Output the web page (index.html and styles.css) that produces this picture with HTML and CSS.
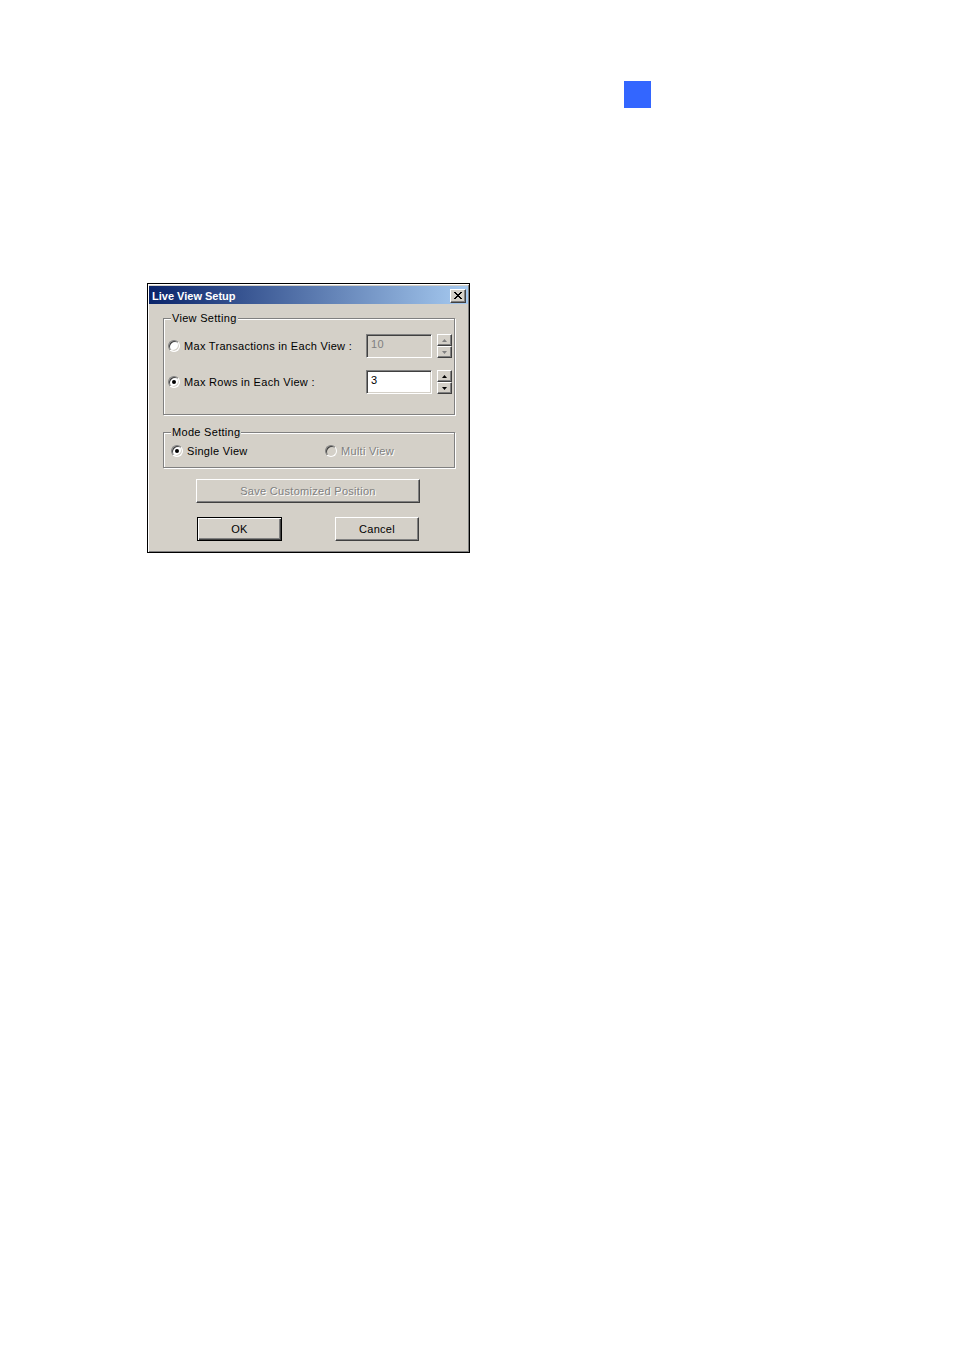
FILE: index.html
```html
<!DOCTYPE html>
<html>
<head>
<meta charset="utf-8">
<link rel="stylesheet" href="styles.css">
</head>
<body>
<div class="page">
  <div class="marker"></div>
  <div class="dialog">
    <div class="titlebar">
      <span class="title">Live View Setup</span>
      <span class="close"><svg width="8" height="7" viewBox="0 0 8 7"><path d="M0 0h2v1h1v1h2V1h1V0h2v1H7v1H6v1H5v1h1v1h1v1h1v1H6V6H5V5H3v1H2v1H0V6h1V5h1V4h1V3H2V2H1V1H0z" fill="#000"/></svg></span>
    </div>
    <div class="content">
      <fieldset class="group">
        <legend>View Setting</legend>
        <div class="group-inner rows">
          <div class="row">
            <span class="radio"></span>
            <span class="label">Max Transactions in Each View :</span>
            <span class="input disabled">10</span>
            <span class="spin">
              <span class="sbtn"><svg width="5" height="3" viewBox="0 0 5 3"><polygon points="2.5,0 5,3 0,3" fill="#808080"/></svg></span>
              <span class="sbtn"><svg width="5" height="3" viewBox="0 0 5 3"><polygon points="0,0 5,0 2.5,3" fill="#808080"/></svg></span>
            </span>
          </div>
          <div class="row">
            <span class="radio checked"></span>
            <span class="label">Max Rows in Each View :</span>
            <span class="input">3</span>
            <span class="spin">
              <span class="sbtn"><svg width="5" height="3" viewBox="0 0 5 3"><polygon points="2.5,0 5,3 0,3" fill="#000"/></svg></span>
              <span class="sbtn"><svg width="5" height="3" viewBox="0 0 5 3"><polygon points="0,0 5,0 2.5,3" fill="#000"/></svg></span>
            </span>
          </div>
        </div>
      </fieldset>
      <fieldset class="group group2">
        <legend>Mode Setting</legend>
        <div class="group-inner modes">
          <div class="opt"><span class="radio checked"></span><span class="label">Single View</span></div>
          <div class="opt off"><span class="radio dis"></span><span class="label">Multi View</span></div>
        </div>
      </fieldset>
      <div class="btn save off">Save Customized Position</div>
      <div class="actions">
        <div class="btn ok default">OK</div>
        <div class="btn cancel">Cancel</div>
      </div>
    </div>
  </div>
</div>
</body>
</html>
```
FILE: styles.css
```css
* { box-sizing: border-box; }
body { margin: 0; background: #fff; font-family: "Liberation Sans", Arial, sans-serif; }
.page { width: 954px; height: 1350px; overflow: hidden; padding-top: 81px; }
.marker { width: 27px; height: 27px; background: #3366ff; margin-left: 624px; }

.dialog {
  margin: 175px 0 0 147px;
  width: 323px;
  height: 270px;
  background: #d4d0c8;
  border: 1px solid #000;
  box-shadow: inset 1px 1px #fff, inset -1px -1px #808080;
  padding: 1px;
  font-size: 11px;
  letter-spacing: 0.3px;
  color: #000;
}
.titlebar {
  height: 18px;
  margin-top: 1px;
  background: linear-gradient(to right, #0a246a, #a6caf0);
  display: flex;
  align-items: center;
  justify-content: space-between;
  padding: 1px 2px 0 3px;
}
.title { color: #fff; font-weight: bold; font-size: 11px; letter-spacing: 0; }
.close {
  width: 16px; height: 14px;
  background: #d4d0c8;
  border: 1px solid; border-color: #fff #404040 #404040 #fff;
  box-shadow: inset -1px -1px #808080;
  display: flex; align-items: center; justify-content: center;
  padding-right: 1px;
}
.close svg { display: block; }

.content { padding: 7px 13px 0 14px; }
.group {
  margin: 0; padding: 0; min-width: 0;
  border: 1px solid #808080;
  box-shadow: inset 1px 1px #fff, 1px 1px #fff;
}
.group legend {
  margin-left: 7px;
  padding: 0 1px;
  line-height: 14px;
  background: #d4d0c8;
}
.rows { padding: 9px 2px 20px 4px; display: flex; flex-direction: column; gap: 12px; }
.row { display: flex; align-items: center; height: 24px; }
.radio {
  width: 12px; height: 12px; flex: none;
  border-radius: 50%;
  border: 1px solid; border-color: #808080 #fff #fff #808080;
  box-shadow: inset 1px 1px #404040, inset -1px -1px #d4d0c8;
  background: #fff;
  display: flex; align-items: center; justify-content: center;
  margin-right: 4px;
}
.radio.checked::after { content: ""; width: 4px; height: 4px; border-radius: 50%; background: #000; }
.radio.dis { background: #d4d0c8; }
.label { flex: 1; white-space: nowrap; line-height: 14px; }
.input {
  width: 66px; height: 24px; flex: none;
  border: 1px solid; border-color: #808080 #fff #fff #808080;
  box-shadow: inset 1px 1px #404040, inset -1px -1px #d4d0c8;
  background: #fff;
  padding: 2px 0 0 4px;
  line-height: 14px;
}
.input.disabled { background: #d4d0c8; color: #808080; }
.spin { width: 15px; height: 24px; margin-left: 5px; flex: none; display: flex; flex-direction: column; }
.sbtn {
  height: 12px; width: 15px;
  background: #d4d0c8;
  border: 1px solid; border-color: #fff #404040 #404040 #fff;
  box-shadow: inset -1px -1px #808080;
  display: flex; align-items: center; justify-content: center;
  padding-right: 1px;
}
.sbtn svg { display: block; }

.group2 { margin-top: 10px; }
.modes { padding: 5px 0 9px 7px; display: grid; grid-template-columns: 154px auto; height: 28px; }
.opt { display: flex; align-items: center; height: 14px; }
.opt.off .label { color: #808080; text-shadow: 1px 1px #fff; }

.btn {
  height: 24px;
  background: #d4d0c8;
  border: 1px solid; border-color: #fff #404040 #404040 #fff;
  box-shadow: inset -1px -1px #808080;
  display: flex; align-items: center; justify-content: center;
  white-space: nowrap;
}
.btn.off { color: #808080; text-shadow: 1px 1px #fff; }
.save { margin: 11px 0 0 33px; width: 224px; }
.actions { display: flex; margin-top: 14px; }
.ok { margin-left: 34px; width: 85px; }
.btn.default {
  border: 1px solid #000;
  box-shadow: inset 1px 1px #fff, inset -1px -1px #404040, inset -2px -2px #808080;
}
.cancel { margin-left: 53px; width: 84px; }
```
